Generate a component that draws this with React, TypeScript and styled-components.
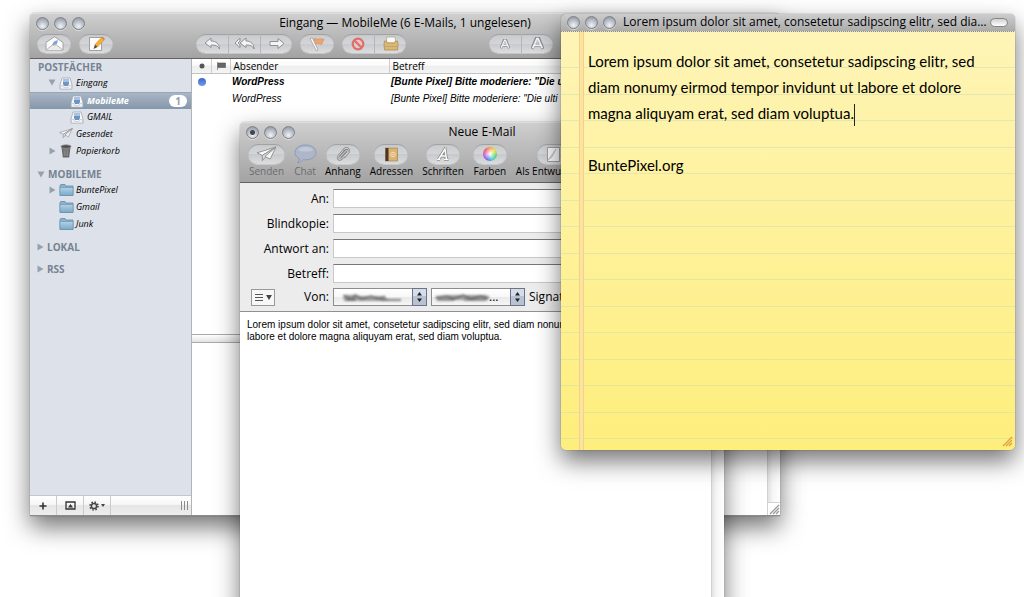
import React from "react";
import styled, { createGlobalStyle, css } from "styled-components";

const UI = '"Open Sans", "Noto Sans", sans-serif';
const HELV = '"Liberation Sans", Arial, sans-serif';

const Global = createGlobalStyle`
  * { box-sizing: border-box; }
  body { margin: 0; background: #fff; font-family: ${UI}; color: #000; }
  button, input, select, textarea { font: inherit; color: inherit; margin: 0; padding: 0; border: 0; background: none; outline: none; }
  svg { display: block; flex: none; }
`;

const Desktop = styled.main`
  position: relative;
  height: 100vh;
  overflow: hidden;
`;

/* ---------- window frames ---------- */
const Frame = styled.section`
  position: absolute;
  display: flex;
  flex-direction: column;
  border-radius: 5px 5px 0 0;
  box-shadow: 0 0 1px rgba(0, 0, 0, 0.7), 0 11px 24px rgba(0, 0, 0, 0.55);
`;
const MailFrame = styled(Frame)`
  left: 30px;
  right: 244px;
  top: 13px;
  bottom: 81px;
`;
const ComposeFrame = styled(Frame)`
  left: 240px;
  right: 300px;
  top: 122px;
  bottom: -60px;
`;
const NoteFrame = styled(Frame)`
  left: 561px;
  right: 9px;
  top: 14px;
  height: 436px;
  border-radius: 5px;
`;

const Chrome = styled.header`
  flex: none;
  background: linear-gradient(#cfcfcf, #c1c1c1 30%, #a3a3a3);
  border-top: 1px solid #dedede;
  border-bottom: 1px solid #626262;
  border-radius: 5px 5px 0 0;
`;
const TitleRow = styled.div`
  display: grid;
  grid-template-columns: 1fr auto 1fr;
  align-items: center;
  height: 18px;
  padding: 0 6px;
`;
const Title = styled.h1`
  margin: 0;
  font-size: 12px;
  line-height: 16px;
  font-weight: 400;
  white-space: nowrap;
`;
const Lights = styled.div`
  display: flex;
  gap: 5px;
`;
const Light = styled.button<{ $dot?: boolean }>`
  width: 13px;
  height: 13px;
  border-radius: 50%;
  border: 1px solid #7d8188;
  background: ${(p) => p.$dot
    ? "radial-gradient(circle at 50% 50%, #42464f 2px, transparent 3px),"
    : ""} radial-gradient(circle at 50% 75%, #f0f3f7, #b4b9c3 55%, #858b96);
  box-shadow: 0 1px 0 rgba(255, 255, 255, 0.5);
`;

const WindowLights = ({ dot = false }: { dot?: boolean }) => (
  <Lights>
    <Light $dot={dot} aria-label="Schließen" />
    <Light aria-label="Minimieren" />
    <Light aria-label="Zoomen" />
  </Lights>
);

/* ---------- toolbar pills ---------- */
const pill = css`
  border-radius: 10px;
  background: linear-gradient(#c9cacc, #d3d5d8 50%, #c7c9cc 52%, #dcdddf);
  box-shadow: inset 0 1px 1px rgba(0, 0, 0, 0.22), 0 1px 0 rgba(255, 255, 255, 0.35);
`;
const MailToolbar = styled.div`
  display: flex;
  gap: 8px;
  height: 26px;
  padding: 2px 7px 5px;
`;
const PillGroup = styled.div<{ $apart?: boolean }>`
  ${pill}
  display: flex;
  height: 19px;
  margin-left: ${(p) => (p.$apart ? 75 : 0)}px;
`;
const PillButton = styled.button<{ $w?: number }>`
  display: grid;
  place-items: center;
  width: ${(p) => p.$w ?? 32}px;
  & + & {
    border-left: 1px solid #b4b5b8;
  }
`;

/* ---------- mail window ---------- */
const MailBody = styled.div`
  flex: 1;
  min-height: 0;
  display: flex;
  background: #fff;
  border-bottom: 1px solid #8b8b8b;
`;
const Sidebar = styled.nav`
  flex: none;
  width: 162px;
  display: flex;
  flex-direction: column;
  background: #dde2ea;
  border-right: 1px solid #b3b3b3;
`;
const SideScroll = styled.div`
  flex: 1;
  min-height: 0;
`;
const SideHead = styled.h2<{ $first?: boolean }>`
  display: flex;
  align-items: center;
  gap: 3px;
  margin: ${(p) => (p.$first ? 0 : 6)}px 0 0;
  padding-left: ${(p) => (p.$first ? 8 : 7)}px;
  height: 16px;
  font-size: 10px;
  line-height: 16px;
  font-weight: 700;
  color: #768392;
`;
const SideRow = styled.a<{ $nested?: boolean; $on?: boolean }>`
  display: flex;
  align-items: center;
  gap: 3px;
  height: 17px;
  padding: 0 4px 2px ${(p) => (p.$nested ? 40 : 18)}px;
  font-size: 9px;
  line-height: 15px;
  font-style: italic;
  font-weight: 500;
  text-decoration: none;
  color: #000;
  ${(p) =>
    p.$on &&
    css`
      color: #fff;
      font-weight: 700;
      padding-bottom: 1px;
      background: linear-gradient(#a9b6c5, #8497ab);
      border-top: 1px solid #98a7b8;
    `}
`;
const Twist = styled.span`
  display: grid;
  place-items: center;
  width: 8px;
  height: 8px;
`;
const IconSlot = styled.span`
  display: grid;
  place-items: center;
  width: 14px;
`;
const Badge = styled.span`
  margin-left: auto;
  width: 18px;
  border-radius: 6px;
  background: #fff;
  color: #8fa0b3;
  font-style: normal;
  font-size: 10px;
  line-height: 12px;
  text-align: center;
`;
const SideFoot = styled.footer`
  flex: none;
  display: flex;
  height: 20px;
  border-top: 1px solid #c3c7cd;
  background: linear-gradient(#fff, #f5f5f5 48%, #e6e6e6 50%, #ededed);
`;
const FootButton = styled.button`
  display: flex;
  align-items: center;
  justify-content: center;
  gap: 2px;
  width: 27px;
  border-right: 1px solid #cbcbcb;
`;
const FootGrip = styled.span`
  margin: 5px 3px 0 auto;
`;

const Panes = styled.div`
  flex: 1;
  min-width: 0;
  display: flex;
  flex-direction: column;
`;
const ListPane = styled.div`
  height: 275px;
  overflow: hidden;
`;
const MessageTable = styled.table`
  width: 100%;
  table-layout: fixed;
  border-collapse: collapse;
  font-size: 10px;
  line-height: 14px;
`;
const Th = styled.th<{ $w?: number }>`
  width: ${(p) => (p.$w ? p.$w + "px" : "auto")};
  height: 14px;
  padding: 0 2px 0 3px;
  text-align: left;
  font-weight: 400;
  white-space: nowrap;
  background: linear-gradient(#fff, #fafafa 45%, #ededed 50%, #f4f4f4);
  border-bottom: 1px solid #c2c2c2;
  border-left: 1px solid #cdcdcd;
  &:first-child {
    border-left: 0;
  }
  svg {
    margin: 0 auto;
  }
`;
const Td = styled.td`
  height: 17px;
  padding: 0 2px;
  font-family: ${HELV};
  font-style: italic;
  white-space: nowrap;
  overflow: hidden;
`;
const MessageRow = styled.tr<{ $unread?: boolean }>`
  font-weight: ${(p) => (p.$unread ? 700 : 400)};
`;
const Unread = styled.span`
  display: block;
  width: 8px;
  height: 8px;
  margin-left: 4px;
  border-radius: 50%;
  background: linear-gradient(#3d66c8, #6f9cf0);
`;
const Splitter = styled.div`
  flex: none;
  height: 9px;
  border: 1px solid #a9a9a9;
  border-width: 1px 0;
  background: linear-gradient(#fff, #e2e2e2);
`;
const Preview = styled.div`
  flex: 1;
  display: flex;
  justify-content: flex-end;
`;
const Scroller = styled.div`
  width: 13px;
  display: flex;
  flex-direction: column;
  justify-content: flex-end;
  border-left: 1px solid #d2d2d2;
  background: linear-gradient(90deg, #e2e2e2, #f6f6f6 40%, #fff);
`;
const GrowBox = styled.div`
  display: grid;
  place-items: end;
  height: 13px;
  border-top: 1px solid #d2d2d2;
  background: #fff;
`;

/* ---------- compose window ---------- */
const ComposeToolbar = styled.div`
  display: flex;
  gap: 9px;
  height: 41px;
  padding: 3px 8px 0;
`;
const Tool = styled.button<{ $dim?: boolean }>`
  flex: none;
  display: flex;
  flex-direction: column;
  align-items: center;
  font-size: 10px;
  line-height: 14px;
  white-space: nowrap;
  color: ${(p) => (p.$dim ? "#6c6c6c" : "#000")};
`;
const ToolFace = styled.span<{ $w?: number; $bare?: boolean }>`
  ${(p) => !p.$bare && pill}
  display: grid;
  place-items: center;
  width: ${(p) => p.$w ?? 34}px;
  height: 20px;
`;
const Headers = styled.form`
  flex: none;
  display: grid;
  grid-template-columns: 89px 1fr;
  grid-template-rows: repeat(4, 19px) 16px;
  row-gap: 6px;
  column-gap: 4px;
  align-items: center;
  padding: 6px 0 0;
  height: 129px;
  font-size: 12px;
  line-height: 18px;
  background: #ececec;
  border-bottom: 1px solid #8d9097;
`;
const Label = styled.label`
  text-align: right;
  white-space: nowrap;
`;
const Field = styled.input`
  height: 19px;
  width: 100%;
  background: #fff;
  border: 1px solid #c8c8c8;
  border-top: 1px solid #777;
`;
const FromLabel = styled.div`
  display: flex;
  align-items: center;
  justify-content: space-between;
  padding-left: 11px;
`;
const MenuButton = styled.button`
  display: flex;
  align-items: center;
  justify-content: center;
  gap: 3px;
  width: 24px;
  height: 17px;
  border: 1px solid #999;
  background: #f7f7f7;
`;
const FromRow = styled.div`
  display: flex;
  align-items: center;
  gap: 4px;
  white-space: nowrap;
`;
const Popup = styled.span`
  position: relative;
  width: 94px;
  height: 18px;
`;
const PopupSelect = styled.select`
  appearance: none;
  display: block;
  width: 100%;
  height: 18px;
  border: 1px solid #8d8d8d;
  border-radius: 0;
  background: linear-gradient(#fff, #f8f8f8 48%, #e9e9e9 50%, #f6f6f6);
`;
const Arrows = styled.svg`
  position: absolute;
  right: 0;
  top: 0;
  pointer-events: none;
`;
const Scrawl = styled.svg`
  position: absolute;
  left: 3px;
  top: 4px;
  pointer-events: none;
  filter: blur(1px);
`;
const Dots = styled.span`
  position: absolute;
  left: 58px;
  top: 0;
  pointer-events: none;
`;
const ComposeBody = styled.div`
  flex: 1;
  display: flex;
  background: #fff;
`;
const Draft = styled.textarea`
  flex: 1;
  resize: none;
  overflow: hidden;
  padding: 7px;
  background: #fff;
  font-family: ${HELV};
  font-size: 10px;
  line-height: 12px;
  white-space: pre-wrap;
`;

/* ---------- sticky note ---------- */
const NoteChrome = styled.header`
  flex: none;
  display: flex;
  align-items: center;
  height: 18px;
  padding: 0 7px 2px 6px;
  background:
    repeating-linear-gradient(90deg, #8d8d86 0 1px, #e8e2bf 1px 2px) bottom / 100% 1px no-repeat,
    linear-gradient(#cdcdcd, #a9a9a9);
  border-radius: 5px 5px 0 0;
`;
const NoteTitle = styled(Title)`
  margin: 0 auto 0 7px;
`;
const Lozenge = styled.button`
  width: 18px;
  height: 9px;
  border: 1px solid #858585;
  border-radius: 5px;
  background: linear-gradient(#cfcfcf, #fff);
`;
/* Ruled paper: two rules per 53px tile; the blank head covers the first rule. */
const Paper = styled.div`
  flex: 1;
  display: flex;
  flex-direction: column;
  padding: 16px 30px 3px 27px;
  border-radius: 0 0 5px 5px;
  background:
    linear-gradient(90deg, #f6cf8c 0 1px, #fbe3a0 1px 4px, #f6cf8c 4px 5px) 18px 0 / 5px 100% no-repeat,
    linear-gradient(#fef4b6, #fef4b2) 0 0 / 100% 30px no-repeat,
    linear-gradient(transparent 9px, rgba(200, 220, 175, 0.5) 9px 10px, transparent 10px 35px, rgba(200, 220, 175, 0.5) 35px 36px, transparent 36px) 0 0 / 100% 53px,
    linear-gradient(#fef4b6, #feee7c);
`;
const NoteText = styled.div`
  flex: 1;
  outline: none;
  font-family: Lato, sans-serif;
  font-size: 15px;
  line-height: 26px;
  p {
    margin: 0;
    min-height: 26px;
    white-space: nowrap;
  }
`;
const Caret = styled.span`
  display: inline-block;
  width: 1px;
  height: 22px;
  vertical-align: middle;
  background: #222;
`;
const NoteGrip = styled.div`
  align-self: flex-end;
  margin-right: -28px;
`;

/* ---------- icons ---------- */
const Tray = () => (
  <svg width="14" height="14" viewBox="0 0 14 14">
    <path d="M3 2h8l2 7v4H1V9z" fill="#f7f8fa" stroke="#a2a8b1" strokeWidth=".8" />
    <path d="M4 3h6v5l-1 2H5L4 8z" fill="#6f93c2" />
    <path d="M4 3h6v3H4z" fill="#a8c2e4" />
    <path d="M1.500 9.500H4l1 2h4l1-2h2.500V13h-11z" fill="#eef0f3" stroke="#b2b7bf" strokeWidth=".5" />
  </svg>
);
const Plane = ({ s = 14 }: { s?: number }) => (
  <svg width={s} height={s * 0.75} viewBox="0 0 20 15">
    <path d="M19 1 1 6.500l5 2.500z" fill="#fafafa" stroke="#8f8f8f" strokeWidth=".9" strokeLinejoin="round" />
    <path d="M19 1 6 9v5l2.500-3z" fill="#dcdcdc" stroke="#8f8f8f" strokeWidth=".9" strokeLinejoin="round" />
    <path d="M19 1 8.500 10l5 2.500z" fill="#f4f4f4" stroke="#8f8f8f" strokeWidth=".9" strokeLinejoin="round" />
  </svg>
);
const Trash = () => (
  <svg width="12" height="14" viewBox="0 0 12 14">
    <path d="M1.500 3h9l-1.300 10.500H2.800z" fill="#666" />
    <path d="M4 5l.4 7M6 5v7M8 5l-.4 7" stroke="#a0a0a0" strokeWidth=".7" />
    <ellipse cx="6" cy="2.600" rx="5" ry="1.800" fill="#4c4c4c" stroke="#999" strokeWidth=".8" />
  </svg>
);
const Folder = () => (
  <svg width="15" height="14" viewBox="0 0 15 14">
    <defs>
      <linearGradient id="fold" x1="0" y1="0" x2="0" y2="1">
        <stop offset="0" stopColor="#b4d2e5" />
        <stop offset="1" stopColor="#7aa8c8" />
      </linearGradient>
    </defs>
    <path d="M1 12.500V2.500l.8-1H6l.8 1.500H14v9.500z" fill="#8bb3cd" stroke="#5f8aa8" strokeWidth=".8" />
    <path d="M1 4.500h13v8H1z" fill="url(#fold)" stroke="#6792b0" strokeWidth=".6" />
  </svg>
);
const Down = () => (
  <svg width="8" height="7" viewBox="0 0 8 7"><path d="M.5.500h7L4 6.500z" fill="#97a1ac" /></svg>
);
const Right = () => (
  <svg width="7" height="8" viewBox="0 0 7 8"><path d="M.5.500v7L6.500 4z" fill="#97a1ac" /></svg>
);
const arrowProps = { fill: "#f4f4f4", stroke: "#8f9093", strokeWidth: 1, strokeLinejoin: "round" as const };
const Reply = () => (
  <svg width="17" height="13" viewBox="0 0 17 13">
    <path d="M7 1 1 6l6 4.500V8c4 0 7 .5 8.500 4C15.500 7 12 4 7 4z" {...arrowProps} />
  </svg>
);
const ReplyAll = () => (
  <svg width="21" height="13" viewBox="0 0 21 13">
    <path d="M6 1 1 6l5 4.500V8L4 6l2-2z" {...arrowProps} />
    <path d="M12 1 6 6l6 4.500V8c4 0 6.500.5 8 4C20 7 17 4 12 4z" {...arrowProps} />
  </svg>
);
const Forward = () => (
  <svg width="16" height="13" viewBox="0 0 16 13">
    <path d="M1 4.500h8V1.500L15 6.500l-6 5v-3H1z" {...arrowProps} />
  </svg>
);
const OpenMail = () => (
  <svg width="19" height="15" viewBox="0 0 19 15">
    <path d="M1 6.500 9.500.7 18 6.500V14H1z" fill="#fafafa" stroke="#929292" strokeWidth=".8" />
    <path d="M4 5.500h11v4l-5 3H8l-4-3z" fill="#fff" />
    <path d="M7 9l2-3.500 4-1.500-1 4-3 1z" fill="#7ba5d8" />
    <path d="m1 14 6.500-5h4L18 14" fill="#ececec" stroke="#a5a5a5" strokeWidth=".8" />
  </svg>
);
const Write = () => (
  <svg width="17" height="16" viewBox="0 0 17 16">
    <path d="M1.500 1.500h12v13h-12z" fill="#fcfcfc" stroke="#8e8e8e" strokeWidth=".8" />
    <path d="M13.500 1.500 16 4l-6.500 7-2.500-2.500z" fill="#f4b133" stroke="#c08329" strokeWidth=".5" />
    <path d="m7 8.500 2.500 2.500L5.500 13z" fill="#5d4630" />
    <path d="m13.500 1.500 1-1L17 3l-1 1z" fill="#d9796c" />
  </svg>
);
const FlagPin = () => (
  <svg width="18" height="16" viewBox="0 0 18 16">
    <path d="M5 3.500c2.500-2.500 4 .5 6-.5 1.500-1 2.500.5 5 0L14 8c-2 1-2.500-1-4-.5-1.200.5-2 .5-3 .5z" fill="#eda36d" stroke="#d08b58" strokeWidth=".5" />
    <path d="M2 2.500 4.500 2l5.500 12-1.500 1z" fill="#fafafa" stroke="#9a9a9a" strokeWidth=".7" />
  </svg>
);
const Forbid = () => (
  <svg width="14" height="14" viewBox="0 0 14 14">
    <circle cx="7" cy="7" r="5.300" fill="#e6c6c6" stroke="#dc6f6c" strokeWidth="2.200" />
    <path d="m3.500 3.500 7 7" stroke="#dc6f6c" strokeWidth="2.200" />
  </svg>
);
const Crate = () => (
  <svg width="16" height="15" viewBox="0 0 16 15">
    <path d="M4 1h8l1 6H3z" fill="#fbfbf5" stroke="#a3a08e" strokeWidth=".7" />
    <path d="M1.500 5h2l1 2h7l1-2h2L15 8l-.5 6h-13L1 8z" fill="#dcb877" stroke="#b08d52" strokeWidth=".8" />
    <path d="M1.500 10.500h13" stroke="#c19d60" strokeWidth=".8" />
  </svg>
);
const GlyphA = ({ s }: { s: number }) => (
  <svg width={s} height={s} viewBox="0 0 12 12">
    <path d="M1 11 5 1h2l4 10M3 7.700h6" fill="none" stroke="#8a8b8e" strokeWidth="3" strokeLinejoin="round" />
    <path d="M1.500 10.500 5.500 1.500h1l4 9M3.200 7.700h5.600" fill="none" stroke="#f3f3f4" strokeWidth="1.600" />
  </svg>
);
const Grip = ({ c = "#999" }: { c?: string }) => (
  <svg width="11" height="11" viewBox="0 0 11 11">
    <path d="M1 10 10 1M4 10l6-6M7 10l3-3" stroke={c} strokeWidth="1.300" />
  </svg>
);
const Bubble = () => (
  <svg width="23" height="20" viewBox="0 0 23 20">
    <path d="M11.500 1C5.500 1 1 4 1 8.500c0 3 2 5 4.500 6.200-.3 2-1 3-2 4 2.500-.2 4.500-1.500 5.500-3 7 .8 13-2 13-7.200C22 4 17.500 1 11.500 1z" fill="#aeb7c7" stroke="#8b9bba" strokeWidth="1" />
    <path d="M4 6c2-4 13-4 15 0-3 2-12 2-15 0z" fill="#c1c9d8" />
  </svg>
);
const clipPath = "m5.500 10.500 5-5.500c1.500-1.500 3 0 1.800 1.500L6.500 13c-2 2-5-.5-3-3L9 3.500c2.500-3 6.500 0 4.500 3L9.500 11";
const Clip = () => (
  <svg width="16" height="16" viewBox="0 0 16 16" fill="none" strokeLinecap="round">
    <path d={clipPath} stroke="#808080" strokeWidth="2" />
    <path d={clipPath} stroke="#ececec" strokeWidth=".8" />
  </svg>
);
const Book = () => (
  <svg width="13" height="15" viewBox="0 0 13 15">
    <rect x=".5" y="1" width="12" height="13" fill="#dcb273" stroke="#9a7a4c" strokeWidth=".6" />
    <rect x=".5" y="1" width="3" height="13" fill="#4a3526" />
    <circle cx="8" cy="7.500" r="2.300" fill="none" stroke="#f6e2bd" strokeWidth=".9" />
    <circle cx="8" cy="7.500" r=".8" fill="#f6e2bd" />
  </svg>
);
const fontPath = "M1 12.500h3M8 12.500h4.500M2.500 12.500 9 2l1.500 10.500M5 9h5";
const FontA = () => (
  <svg width="14" height="14" viewBox="0 0 14 14" fill="none">
    <path d={fontPath} stroke="#868686" strokeWidth="3" />
    <path d={fontPath} stroke="#fafafa" strokeWidth="1.500" />
  </svg>
);
const Wheel = styled.span`
  width: 14px;
  height: 14px;
  border-radius: 50%;
  background:
    radial-gradient(circle, #fff, rgba(255, 255, 255, 0) 65%),
    conic-gradient(#f7a14a, #e8e04c, #5fd35c, #4cc9d9, #5a72e8, #c45be0, #ee5470, #f7a14a);
`;
const DraftIcon = () => (
  <svg width="15" height="15" viewBox="0 0 15 15">
    <path d="M1.500.500h12v14h-12z" fill="#f9f9f9" stroke="#8d8d8d" strokeWidth=".8" />
    <path d="m2 13 8-11-4 8z" fill="#dedede" stroke="#adadad" strokeWidth=".6" />
  </svg>
);

const PopupArrows = () => (
  <Arrows width="15" height="18" viewBox="0 0 15 18">
    <rect x=".5" y=".5" width="14" height="17" fill="#b9c2d0" stroke="#69748a" />
    <path d="M1 1h13v7H1z" fill="#d7dde7" />
    <path d="M7.500 4 10 7.500H5zM7.500 14 5 10.500h5z" fill="#1d222c" />
  </Arrows>
);

export default function App() {
  return (
    <Desktop>
      <Global />
      <MailFrame>
        <Chrome>
          <TitleRow>
            <WindowLights />
            <Title>Eingang — MobileMe (6 E-Mails, 1 ungelesen)</Title>
          </TitleRow>
          <MailToolbar>
            <PillGroup><PillButton $w={34} aria-label="Empfangen"><OpenMail /></PillButton></PillGroup>
            <PillGroup><PillButton $w={34} aria-label="Neue E-Mail"><Write /></PillButton></PillGroup>
            <PillGroup $apart>
              <PillButton aria-label="Antworten"><Reply /></PillButton>
              <PillButton aria-label="Allen antworten"><ReplyAll /></PillButton>
              <PillButton aria-label="Weiterleiten"><Forward /></PillButton>
            </PillGroup>
            <PillGroup><PillButton $w={34} aria-label="Markieren"><FlagPin /></PillButton></PillGroup>
            <PillGroup>
              <PillButton aria-label="Löschen"><Forbid /></PillButton>
              <PillButton aria-label="Werbung"><Crate /></PillButton>
            </PillGroup>
            <PillGroup $apart>
              <PillButton aria-label="Kleiner"><GlyphA s={10} /></PillButton>
              <PillButton aria-label="Größer"><GlyphA s={13} /></PillButton>
            </PillGroup>
          </MailToolbar>
        </Chrome>
        <MailBody>
          <Sidebar>
            <SideScroll>
              <SideHead $first>POSTFÄCHER</SideHead>
              <SideRow href="#eingang"><Twist><Down /></Twist><IconSlot><Tray /></IconSlot>Eingang</SideRow>
              <SideRow href="#mobileme" $nested $on><IconSlot><Tray /></IconSlot>MobileMe<Badge>1</Badge></SideRow>
              <SideRow href="#gmail" $nested><IconSlot><Tray /></IconSlot>GMAIL</SideRow>
              <SideRow href="#gesendet"><Twist /><IconSlot><Plane /></IconSlot>Gesendet</SideRow>
              <SideRow href="#papierkorb"><Twist><Right /></Twist><IconSlot><Trash /></IconSlot>Papierkorb</SideRow>
              <SideHead><Down />MOBILEME</SideHead>
              <SideRow href="#buntepixel"><Twist><Right /></Twist><IconSlot><Folder /></IconSlot>BuntePixel</SideRow>
              <SideRow href="#gmail-ordner"><Twist /><IconSlot><Folder /></IconSlot>Gmail</SideRow>
              <SideRow href="#junk"><Twist /><IconSlot><Folder /></IconSlot>Junk</SideRow>
              <SideHead><Right />LOKAL</SideHead>
              <SideHead><Right />RSS</SideHead>
            </SideScroll>
            <SideFoot>
              <FootButton aria-label="Hinzufügen">
                <svg width="8" height="8" viewBox="0 0 8 8"><path d="M4 .500v7M.5 4h7" stroke="#333" strokeWidth="1.600" /></svg>
              </FootButton>
              <FootButton aria-label="Aktivität">
                <svg width="11" height="9" viewBox="0 0 11 9"><path d="M1 1h9v7H1z" fill="none" stroke="#333" strokeWidth="1.300" /><path d="M5.500 3 8 6.500H3z" fill="#333" /></svg>
              </FootButton>
              <FootButton aria-label="Aktionen">
                <svg width="10" height="10" viewBox="0 0 10 10"><circle cx="5" cy="5" r="2.600" fill="none" stroke="#444" strokeWidth="1.500" /><circle cx="5" cy="5" r="4" fill="none" stroke="#444" strokeWidth="1.500" strokeDasharray="1.570 1.570" /></svg>
                <svg width="4" height="3" viewBox="0 0 4 3"><path d="M0 0h4L2 3z" fill="#444" /></svg>
              </FootButton>
              <FootGrip>
                <svg width="8" height="9" viewBox="0 0 8 9"><path d="M1.500 0v9M4.500 0v9M7.500 0v9" stroke="#8b8b8b" /></svg>
              </FootGrip>
            </SideFoot>
          </Sidebar>
          <Panes>
            <ListPane>
              <MessageTable>
                <thead>
                  <tr>
                    <Th $w={19} aria-label="Status"><svg width="6" height="6" viewBox="0 0 6 6"><circle cx="3" cy="3" r="2.500" fill="#555" /></svg></Th>
                    <Th $w={19} aria-label="Markiert"><svg width="9" height="8" viewBox="0 0 9 8"><path d="M.500 0v8M1 1h7.500v4.500H1z" fill="#666" stroke="#555" strokeWidth=".6" /></svg></Th>
                    <Th $w={159}>Absender</Th>
                    <Th>Betreff</Th>
                  </tr>
                </thead>
                <tbody>
                  <MessageRow $unread>
                    <Td><Unread /></Td><Td /><Td>WordPress</Td>
                    <Td>[Bunte Pixel] Bitte moderiere: "Die ulti</Td>
                  </MessageRow>
                  <MessageRow>
                    <Td /><Td /><Td>WordPress</Td>
                    <Td>[Bunte Pixel] Bitte moderiere: "Die ulti</Td>
                  </MessageRow>
                </tbody>
              </MessageTable>
            </ListPane>
            <Splitter />
            <Preview>
              <Scroller><GrowBox><Grip /></GrowBox></Scroller>
            </Preview>
          </Panes>
        </MailBody>
      </MailFrame>

      <ComposeFrame>
        <Chrome>
          <TitleRow>
            <WindowLights dot />
            <Title>Neue E-Mail</Title>
          </TitleRow>
          <ComposeToolbar>
            <Tool $dim><ToolFace $w={37}><Plane s={21} /></ToolFace>Senden</Tool>
            <Tool $dim><ToolFace $w={22} $bare><Bubble /></ToolFace>Chat</Tool>
            <Tool><ToolFace><Clip /></ToolFace>Anhang</Tool>
            <Tool><ToolFace><Book /></ToolFace>Adressen</Tool>
            <Tool><ToolFace><FontA /></ToolFace>Schriften</Tool>
            <Tool><ToolFace><Wheel /></ToolFace>Farben</Tool>
            <Tool><ToolFace><DraftIcon /></ToolFace>Als Entwurf sich.</Tool>
          </ComposeToolbar>
        </Chrome>
        <Headers>
          <Label htmlFor="an">An:</Label><Field id="an" />
          <Label htmlFor="bcc">Blindkopie:</Label><Field id="bcc" />
          <Label htmlFor="reply">Antwort an:</Label><Field id="reply" />
          <Label htmlFor="subject">Betreff:</Label><Field id="subject" />
          <FromLabel>
            <MenuButton type="button" aria-label="Felder">
              <svg width="8" height="7" viewBox="0 0 8 7"><path d="M0 .500h8M0 3.500h8M0 6.500h8" stroke="#555" /></svg>
              <svg width="6" height="5" viewBox="0 0 6 5"><path d="M0 0h6L3 5z" fill="#444" /></svg>
            </MenuButton>
            <Label htmlFor="von">Von:</Label>
          </FromLabel>
          <FromRow>
            <Popup>
              <PopupSelect id="von"><option aria-label="Absender" /></PopupSelect>
              <Scrawl width="68" height="11" viewBox="0 0 68 11">
                <path d="M7 3h14l3 1h20l5 1 4 3-8 1H24l-8-1-8 1z" fill="#9c9c9c" />
                <path d="M8 3l8 5 3-5 7 4 9-3 8 3 6-3M10 8h10M45 8h20" stroke="#5f5f5f" strokeWidth="1.300" fill="none" />
              </Scrawl>
              <PopupArrows />
            </Popup>
            <Popup>
              <PopupSelect id="konto"><option aria-label="Konto" /></PopupSelect>
              <Scrawl width="68" height="11" viewBox="0 0 68 11">
                <path d="M2 4l12-1h38l4 2-3 3H5L1 6z" fill="#9b9b9b" />
                <path d="M2 6l10-2 8 3 9-4 8 4 10-3 7 3M3 8h17M30 8h22" stroke="#555" strokeWidth="1.200" fill="none" />
              </Scrawl>
              <Dots>...</Dots>
              <PopupArrows />
            </Popup>
            <Label htmlFor="konto">Signatur:</Label>
          </FromRow>
        </Headers>
        <ComposeBody>
          <Draft
            aria-label="Nachricht"
            defaultValue={"Lorem ipsum dolor sit amet, consetetur sadipscing elitr, sed diam nonumy eirmod tempor invidunt ut\nlabore et dolore magna aliquyam erat, sed diam voluptua."}
          />
          <Scroller />
        </ComposeBody>
      </ComposeFrame>

      <NoteFrame>
        <NoteChrome>
          <WindowLights />
          <NoteTitle>Lorem ipsum dolor sit amet, consetetur sadipscing elitr, sed dia…</NoteTitle>
          <Lozenge aria-label="Symbolleiste" />
        </NoteChrome>
        <Paper>
          <NoteText role="textbox" aria-label="Notiz" aria-multiline="true" contentEditable suppressContentEditableWarning spellCheck={false}>
            <p>Lorem ipsum dolor sit amet, consetetur sadipscing elitr, sed</p>
            <p>diam nonumy eirmod tempor invidunt ut labore et dolore</p>
            <p>magna aliquyam erat, sed diam voluptua.<Caret /></p>
            <p />
            <p>BuntePixel.org</p>
          </NoteText>
          <NoteGrip><Grip c="#dfa043" /></NoteGrip>
        </Paper>
      </NoteFrame>
    </Desktop>
  );
}
